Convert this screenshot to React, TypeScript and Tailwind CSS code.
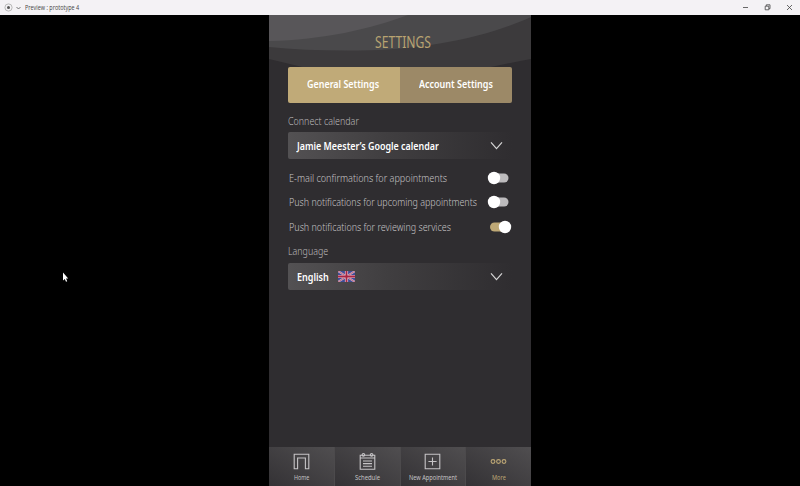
import { useLayoutEffect, useRef, useState } from "react";
import type { ReactNode } from "react";

/** A single line of text condensed horizontally to a given width. */
function Line({ w, className = "", children }: { w: number; className?: string; children: ReactNode }) {
  const ref = useRef<HTMLSpanElement>(null);
  const [k, setK] = useState(1);
  useLayoutEffect(() => {
    if (ref.current) setK(w / ref.current.offsetWidth);
  }, [w]);
  return (
    <span className={`block whitespace-nowrap ${className}`} style={{ width: w }}>
      <span ref={ref} className="inline-block origin-left" style={{ transform: `scaleX(${k})` }}>
        {children}
      </span>
    </span>
  );
}

function Chevron() {
  return (
    <svg className="h-[9px] w-[13px]" viewBox="0 0 13 9" fill="none" stroke="#d6d6d6" strokeWidth="1.2">
      <path d="M1 1.4 6.5 7.6 12 1.4" />
    </svg>
  );
}

function Toggle({ on = false }: { on?: boolean }) {
  return (
    <svg className="h-[14px] w-[26px]" viewBox="0 0 26 14">
      <rect x="3" y="2.5" width="18.5" height="9" rx="4.5" fill={on ? "#bfa976" : "#bdbbbd"} />
      <circle cx={on ? 18 : 7} cy="7" r="6.2" fill="#fff" />
    </svg>
  );
}

function Flag() {
  return (
    <svg className="ml-[9px] h-[11px] w-[17px]" viewBox="0 0 17 11">
      <rect width="17" height="11" fill="#3f4c97" />
      <path d="M0 0 17 11M17 0 0 11" stroke="#c9b3ca" strokeWidth="1.9" />
      <path d="M0 0 17 11M17 0 0 11" stroke="#c4586f" strokeWidth=".8" />
      <path d="M8.5 0V11M0 5.5H17" stroke="#dccbd8" strokeWidth="3.2" />
      <path d="M8.5 0V11M0 5.5H17" stroke="#a92443" strokeWidth="1.8" />
    </svg>
  );
}

function Select({ children }: { children: ReactNode }) {
  return (
    <div className="flex h-[27px] w-[224px] items-center rounded-[2px] bg-linear-to-r from-[#535153] via-[#403e40] via-45% to-[#2f2d30] pr-[9px] pl-[8.5px] text-[11.3px] leading-[25px] font-semibold text-white">
      {children}
      <span className="ml-auto"><Chevron /></span>
    </div>
  );
}

function Row({ w, on, children }: { w: number; on?: boolean; children: ReactNode }) {
  return (
    <div className="flex h-[24.5px] items-center pl-[1px] text-[11.3px] leading-[16px] font-light text-[#c4c2c4]">
      <Line w={w} className="mt-px">{children}</Line>
      <span className="mt-px mr-[-1px] ml-auto"><Toggle on={on} /></span>
    </div>
  );
}

function NavItem({ w, label, gold, last, children }: { w: number; label: string; gold?: boolean; last?: boolean; children: ReactNode }) {
  return (
    <div className={`flex flex-1 flex-col items-center bg-linear-to-tr from-[#343235] to-[#504e50] pt-[5px] ${last ? "" : "border-r border-[#4c4a4c]"} ${gold ? "text-[#bda775]" : "text-[#c6c4c6]"}`}>
      <svg className="h-[19px] w-[19px]" viewBox="0 0 19 19" fill="none" stroke="currentColor" strokeWidth="1.1">
        {children}
      </svg>
      <Line w={w} className="mt-[2px] text-[6.8px] leading-[10px]">{label}</Line>
    </div>
  );
}

export default function App() {
  return (
    <div className="relative flex h-[486px] w-[800px] flex-col overflow-hidden bg-black font-['Noto_Sans',sans-serif]">
      <header className="flex h-[15px] shrink-0 items-center bg-[#f4f2f5] pl-[4px] text-[#444]">
        <svg className="h-[9px] w-[9px]" viewBox="0 0 9 9">
          <circle cx="4.5" cy="4.5" r="3.6" fill="none" stroke="#aaa" strokeWidth=".8" />
          <circle cx="4.5" cy="4.5" r="1.5" fill="#555" />
        </svg>
        <svg className="ml-[3px] h-[4px] w-[5px]" viewBox="0 0 5 4" fill="none" stroke="#555" strokeWidth=".8">
          <path d="M.5 1 2.5 3 4.5 1" />
        </svg>
        <Line w={54} className="ml-[4px] font-['Open_Sans',sans-serif] text-[6.2px] leading-[15px]">Preview : prototype 4</Line>
        <svg className="ml-auto h-[9px] w-[59px]" viewBox="0 0 59 9" fill="none" stroke="#444" strokeWidth=".8">
          <path d="M2 4.5H7M46 2 51 7M51 2 46 7" />
          <path d="M24.2 3.2H27.8V6.8H24.2ZM25.3 3V1.8H29V5.7H28" />
        </svg>
      </header>

      <main className="relative mx-auto flex min-h-0 w-[262px] flex-1 flex-col bg-[#2f2d30]">
        <svg className="absolute top-0 left-0 h-[60px] w-[262px]" viewBox="0 0 262 60">
          <path d="M0 0H262V44Q229 50 205 56H50Q25 50 0 44Z" fill="#3c3a3c" />
          <path d="M0 0H262V2C218 22 156 35 90 35.500Q38 36 0 32Z" fill="#4a494b" />
          <path d="M0 0H139C102 14 53 25 0 26Z" fill="#585659" />
        </svg>

        <div className="relative flex flex-1 flex-col px-[19px]">
          <h1 className="pt-[16px] pl-[87px] text-[15.4px] leading-[23px] font-normal text-[#b8a371]">
            <Line w={56}>SETTINGS</Line>
          </h1>
          <div className="mt-[13px] flex h-[36px] overflow-hidden rounded-[2px] text-[11.3px] leading-[34px] font-semibold text-white">
            <div className="flex flex-1 bg-[#c0aa78] pl-[19px]"><Line w={72}>General Settings</Line></div>
            <div className="flex flex-1 bg-[#9c8967] pl-[19px]"><Line w={74}>Account Settings</Line></div>
          </div>
          <div className="mt-[10px] mb-[3px] text-[11.3px] leading-[16px] font-light text-[#bbb9bb]">
            <Line w={71}>Connect calendar</Line>
          </div>
          <Select><Line w={142}>Jamie Meester’s Google calendar</Line></Select>
          <div className="mt-[6px] flex flex-col">
            <Row w={158}>E-mail confirmations for appointments</Row>
            <Row w={188}>Push notifications for upcoming appointments</Row>
            <Row w={162} on>Push notifications for reviewing services</Row>
          </div>
          <div className="mt-[4px] mb-[4px] text-[11.3px] leading-[16px] font-light text-[#bbb9bb]">
            <Line w={40}>Language</Line>
          </div>
          <Select><Line w={32}>English</Line><Flag /></Select>
        </div>

        <nav className="flex h-[39px]">
          <NavItem w={15} label="Home">
            <path d="M2.2 2.2H16.8V16.8H13.4V6H5.6V16.8H2.2Z" />
          </NavItem>
          <NavItem w={25} label="Schedule">
            <path d="M2.2 3.2H16.8V17.2H2.2ZM2.2 6H16.8M5 9H14M5 11.6H14M5 14.2H14" />
            <circle cx="5.4" cy="2.8" r="1.3" />
            <circle cx="13.6" cy="2.8" r="1.3" />
          </NavItem>
          <NavItem w={48} label="New Appointment">
            <path d="M2.2 2.2H16.8V16.8H2.2ZM9.5 5.4V13.6M5.4 9.5H13.6" />
          </NavItem>
          <NavItem w={14} label="More" gold last>
            <circle cx="4" cy="9.5" r="1.9" />
            <circle cx="9.5" cy="9.5" r="1.9" />
            <circle cx="15" cy="9.5" r="1.9" />
          </NavItem>
        </nav>
      </main>

      <svg className="absolute top-[272px] left-[62px] h-[11px] w-[7px]" viewBox="0 0 7 11">
        <path d="M1 .5V8.5L2.8 7 4 9.8 5.2 9.2 4 6.6H6.2Z" fill="#fff" />
      </svg>
    </div>
  );
}
